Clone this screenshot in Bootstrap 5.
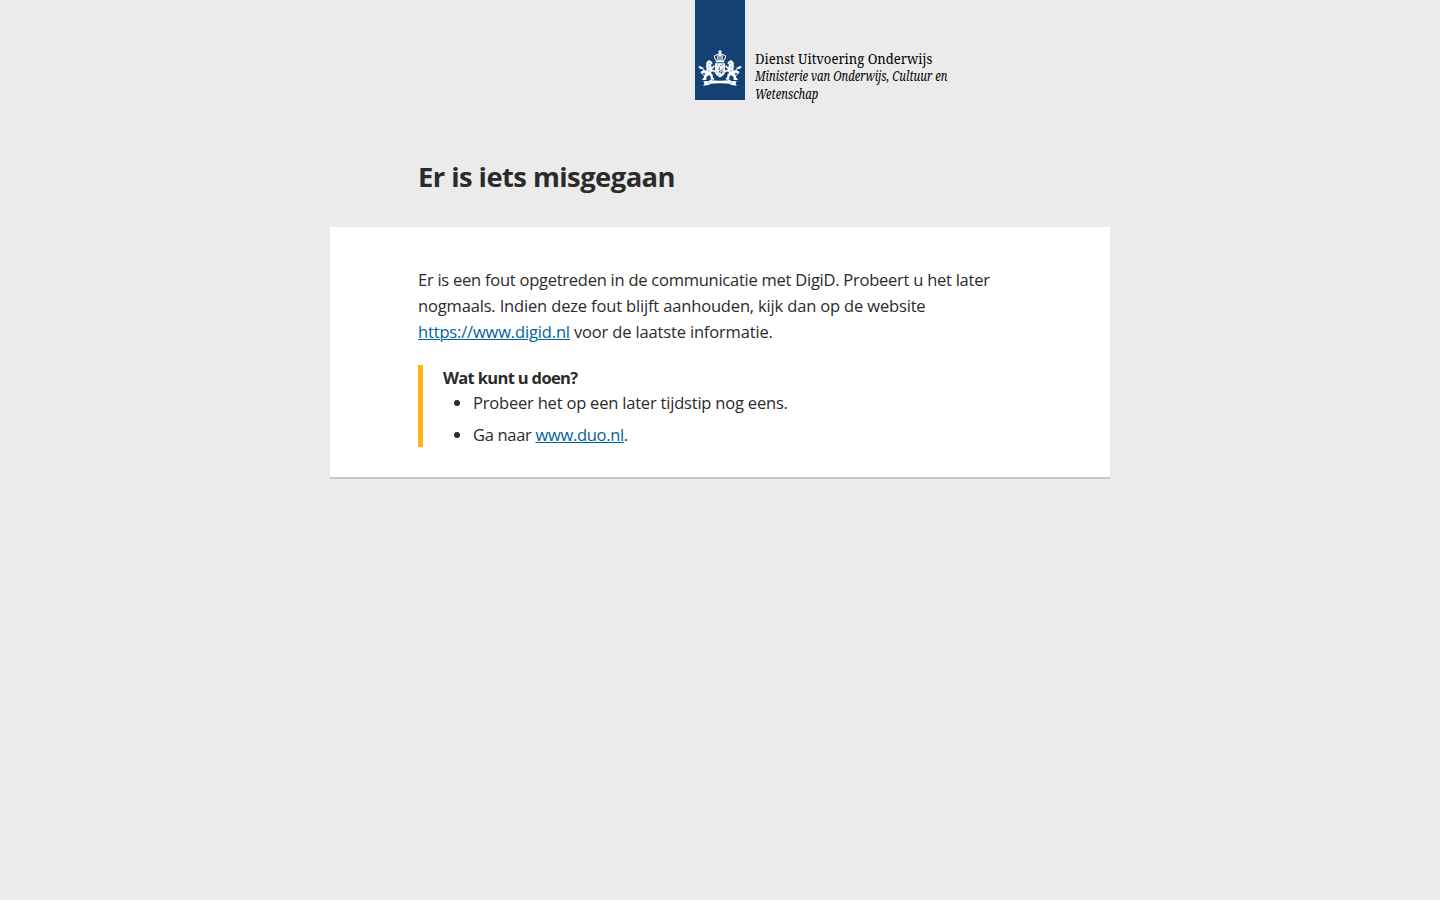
<!DOCTYPE html>
<html lang="nl">
<head>
<meta charset="utf-8">
<meta name="viewport" content="width=device-width, initial-scale=1">
<title>Er is iets misgegaan</title>
<link href="https://cdn.jsdelivr.net/npm/bootstrap@5.3.0/dist/css/bootstrap.min.css" rel="stylesheet">
<style>
  body { background: #ebebeb; color: #2b2b2b; font: 16.5px/26px "Open Sans", "Noto Sans", sans-serif; letter-spacing: -.25px; }
  a { color: #0162a0; text-underline-offset: 1px; text-decoration-thickness: 1px; }
  .page { width: 780px; }
  .brand { height: 159px; padding-left: 365px; gap: 10px; }
  .ribbon { width: 50px; height: 100px; background: #154273; }
  .sender { padding-top: 49px; color: #000; font-family: "Noto Serif", serif; line-height: 18px; letter-spacing: 0; }
  .sender span { display: block; white-space: nowrap; transform-origin: 0 50%; width: 190px; }
  .org { font-size: 14.5px; transform: scaleX(.903); }
  .ministry { font-size: 14px; font-style: italic; transform: scaleX(.801); }
  h1 { font-size: 27.4px; line-height: 36px; font-weight: 700; letter-spacing: -.56px; padding-left: 88px; margin-bottom: 32px; }
  .panel { padding: 40px 88px 30px; border-bottom: 2px solid #c8c8c8; }
  .intro { margin-bottom: 20px; }
  .advice { letter-spacing: -.16px; }
  .tip { border-left: 5px solid #ffb612; padding-left: 20px; line-height: 25px; }
  .tip ul { padding-left: 30px; }
  .tip li { letter-spacing: -.2px; }
  .tip li + li { margin-top: 7px; letter-spacing: -.31px; }
  .tip strong { letter-spacing: -.66px; }
</style>
</head>
<body>
<div class="page mx-auto">
  <header class="brand d-flex align-items-start">
    <svg class="ribbon flex-shrink-0" viewBox="0 0 50 100" role="img" aria-label="Rijkswapen">
      <g fill="#fff" stroke="none">
        <!-- crown -->
        <path d="M24.4 50h1.200v1.300h1.200v1.100h-1.200v1.600h-1.200v-1.600h-1.200v-1.100h1.200z"/>
        <path d="M20.800 60.200h8.400v2.100h-8.400z"/>
        <g fill="none" stroke="#fff" stroke-width="1.100">
          <path d="M21.200 60c-3.200-3-1.700-5.400.8-5 1.400-1.700 4.600-1.700 6 0 2.500-.4 4 2 .8 5M23.200 60c-1-2-.6-4 1.800-5.600 2.400 1.600 2.800 3.600 1.800 5.600M25 54v6"/>
        </g>
        <!-- lion, mirrored for the right-hand supporter -->
        <g id="supporter">
          <path d="M12.300 61.200l1.300-.9 1.500.3 1.600 1.100.9 1.300-.4 1.300-1.500.2.9 1.500-.6 1.600 1.300-.8 1.600-1.500 1 .8-1.200 1.900-2.200 1.500 2.700.5 1.200 1.400-.8 1-1.500-.9-1.700.2-.3 1.500 1.500 1.400.2 2.500 1.400 1.600-.4 1-2.900.1-.4-1.100.5-1.600-1.700-1.800-2 .6-1.100 2 .4 1.500-.7.6-3.300-.1-.4-1 1.600-.8.2-2.300 1.200-2.300-1.400-.8-2.200.8-1-.8.4-1.500 1.600.3.300-1.200 1.600-.3 1.500.8.8-2.300-.9-1.600.6-2.100-.7-.9.8-1.200z"/>
          <path d="M8.700 75.500c-2.200-1.500-1.500-3.500-.5-5s.7-2.500-1-2.400c-1.200.1-1.800-.6-3.600-.7" fill="none" stroke="#fff" stroke-width="1"/>
          <path d="M3.600 66l2.600.5 1.900 1.500-1 1.300-2.200-.5zM6.600 71.500l2.100-.8.3 2-1.500 1z"/>
          <path d="M14 63.300h1.200M13 66.500l1.600 1.500M12.500 70l2.200 1.500" fill="none" stroke="#154273" stroke-width=".6"/>
        </g>
        <use href="#supporter" transform="matrix(-1 0 0 1 50 0)"/>
        <!-- shield -->
        <path d="M20 63.300h10v8.300c0 2.800-2 4.300-5 5.900-3-1.600-5-3.100-5-5.900z"/>
        <path d="M22 65h.9M27.200 64.800h1M21.300 68h.9M28 68h.9M21.500 72h.9M27.700 72h.9M23.500 74.900h1M23.600 66.600l1 1.300-.9 1.700 1.600.6-1.400 2 2.300-.2.300 1.700.8-2.700-.7-1.200 1.200-.8M25 65.300l1.500.8" fill="none" stroke="#154273" stroke-width=".75"/>
        <!-- motto band -->
        <path d="M14.500 79.900c7 1 14 1 21 0l1.500 4c-8-.9-16-.9-24 0z"/>
        <path d="M13.800 81l-5.600.3 1.300 1.900-1.300 2.400c2.600-.1 4.700-.1 6.600-1l.7-1.600zM36.200 81l5.600.3-1.300 1.900 1.300 2.400c-2.600-.1-4.700-.1-6.600-1l-.7-1.600z"/>
        <path d="M13.800 81.200v2.500M36.200 81.200v2.500" fill="none" stroke="#154273" stroke-width=".5"/>
      </g>
    </svg>
    <div class="sender">
      <span class="org">Dienst Uitvoering Onderwijs</span>
      <span class="ministry">Ministerie van Onderwijs, Cultuur en</span>
      <span class="ministry">Wetenschap</span>
    </div>
  </header>
  <main>
    <h1>Er is iets misgegaan</h1>
    <section class="panel bg-white">
      <p class="intro">Er is een fout opgetreden in de communicatie met DigiD. Probeert u het later <span class="advice">nogmaals. Indien deze fout blijft aanhouden, kijk dan op de website <a href="#">https://www.digid.nl</a> voor de laatste informatie.</span></p>
      <div class="tip">
        <strong class="d-block">Wat kunt u doen?</strong>
        <ul class="mb-0">
          <li>Probeer het op een later tijdstip nog eens.</li>
          <li>Ga naar <a href="#">www.duo.nl</a>.</li>
        </ul>
      </div>
    </section>
  </main>
</div>
<script src="https://cdn.jsdelivr.net/npm/bootstrap@5.3.0/dist/js/bootstrap.bundle.min.js"></script>
</body>
</html>
